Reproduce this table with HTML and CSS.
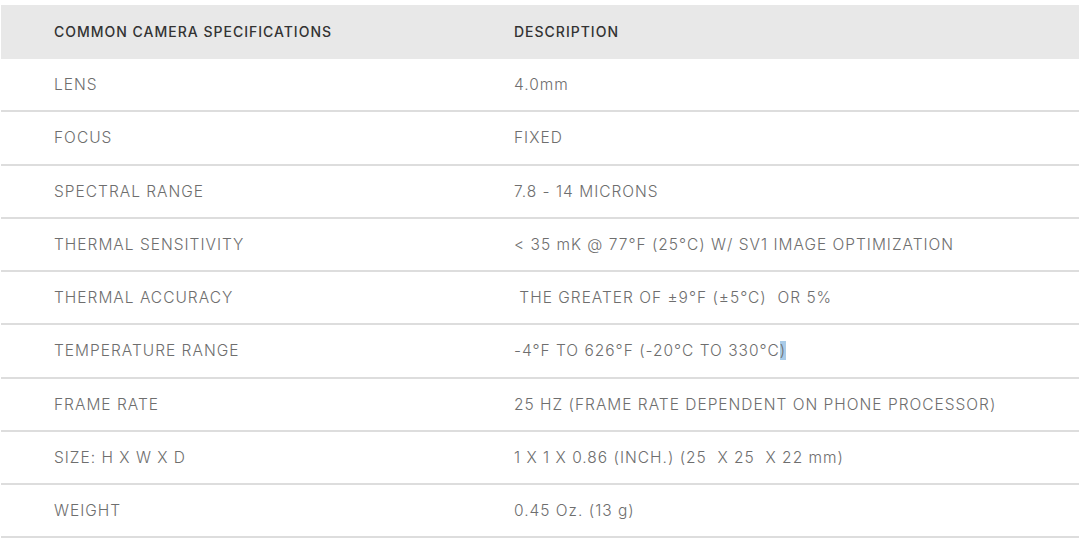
FILE: index.html
```html
<!DOCTYPE html>
<html>
<head>
<meta charset="utf-8">
<link rel="stylesheet" href="styles.css">
</head>
<body>
<table class="specs">
  <thead>
    <tr><th class="c1">COMMON CAMERA SPECIFICATIONS</th><th class="c2">DESCRIPTION</th></tr>
  </thead>
  <tbody>
    <tr><td>LENS</td><td>4.0mm</td></tr>
    <tr><td>FOCUS</td><td>FIXED</td></tr>
    <tr><td>SPECTRAL RANGE</td><td>7.8 - 14 MICRONS</td></tr>
    <tr><td>THERMAL SENSITIVITY</td><td>&lt; 35 mK @ 77°F (25°C) W/ SV1 IMAGE OPTIMIZATION</td></tr>
    <tr><td>THERMAL ACCURACY</td><td> THE GREATER OF ±9°F (±5°C)  OR 5%</td></tr>
    <tr><td>TEMPERATURE RANGE</td><td>-4°F TO 626°F (-20°C TO 330°C<span class="sel">)</span></td></tr>
    <tr><td>FRAME RATE</td><td>25 HZ (FRAME RATE DEPENDENT ON PHONE PROCESSOR)</td></tr>
    <tr><td>SIZE: H X W X D</td><td>1 X 1 X 0.86 (INCH.) (25  X 25  X 22 mm)</td></tr>
    <tr><td>WEIGHT</td><td>0.45 Oz. (13 g)</td></tr>
  </tbody>
</table>
</body>
</html>
```
FILE: styles.css
```css
html, body {
  background: #ffffff;
}
body {
  margin: 5px 0 0 1px;
  font-family: "Inter", "Open Sans", sans-serif;
  overflow: hidden;
}
.specs {
  width: 1090px;
  border-collapse: collapse;
  table-layout: fixed;
}
.specs th {
  background: #e8e8e8;
  color: #333333;
  font-size: 14px;
  font-weight: 500;
  letter-spacing: 1px;
  text-align: left;
  height: 54px;
  padding: 0 0 0 53px;
  line-height: 18px;
}
.specs th.c1 {
  width: 407px;
}
.specs td {
  color: #6e6e6e;
  font-size: 15.5px;
  font-weight: 300;
  letter-spacing: 1px;
  padding: 16px 0 16px 53px;
  line-height: 19.25px;
  border-bottom: 2px solid #dddddd;
  white-space: pre;
}
.sel {
  background: #a8cbe8;
}
```
